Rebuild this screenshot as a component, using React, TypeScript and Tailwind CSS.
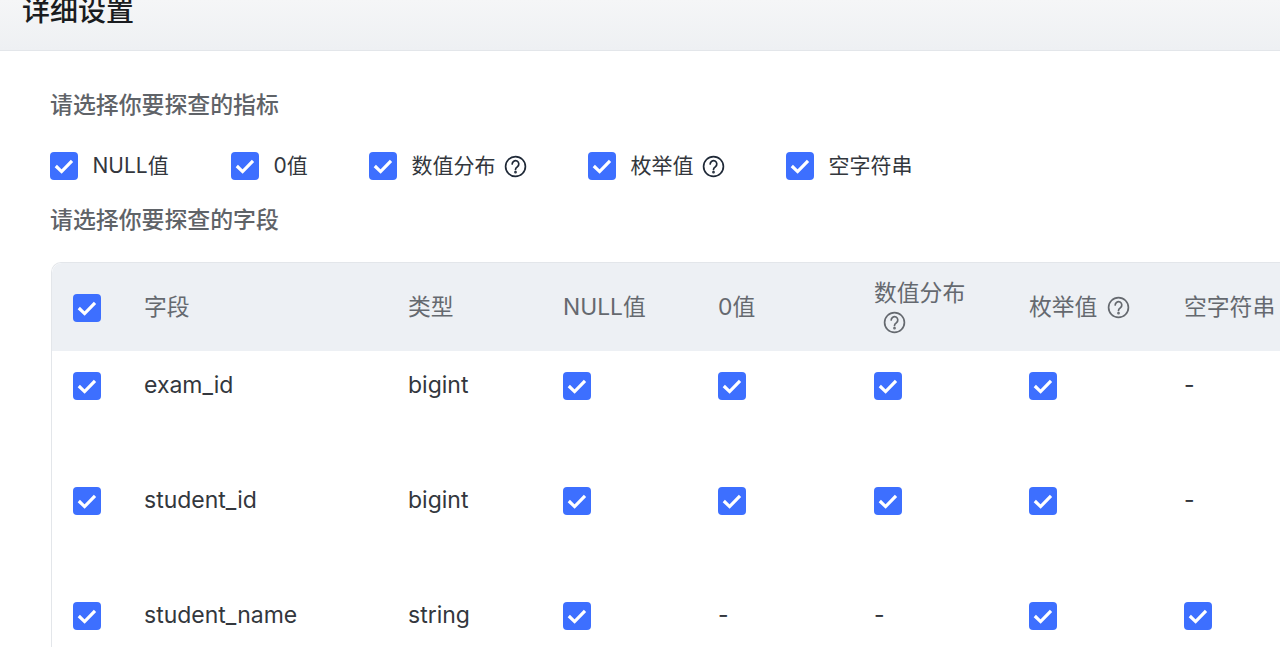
import { Fragment } from 'react';

const FONT = "font-['Inter','Noto_Sans_CJK_SC',sans-serif]";

const Check = ({ className = '' }: { className?: string }) => (
    <span className={`flex h-7 w-7 shrink-0 items-center justify-center rounded-[4px] bg-[#3d6fff] ${className}`}>
        <svg width="20" height="20" viewBox="0 0 20 20" fill="none">
            <path d="M1.8 10 L7.6 15.6 L18 4.8" stroke="#fff" strokeWidth="3.2" />
        </svg>
    </span>
);

const Help = ({ color = '#1f2937' }: { color?: string }) => (
    <svg width="23" height="23" viewBox="0 0 23 23" fill="none" stroke={color} strokeWidth="1.7" className="shrink-0">
        <circle cx="11.5" cy="11.5" r="9.9" />
        <path d="M8.2 9a3.3 3.3 0 1 1 5.2 2.7c-1.2.8-1.9 1.3-1.9 2.8" strokeLinecap="round" />
        <circle cx="11.5" cy="17.2" r="0.5" fill={color} />
    </svg>
);

const metrics = [
    { label: 'NULL值', width: 'w-[181px]' },
    { label: '0值', width: 'w-[138px]' },
    { label: '数值分布', help: true, width: 'w-[219px]' },
    { label: '枚举值', help: true, width: 'w-[198px]' },
    { label: '空字符串', width: 'w-[160px]' },
];

const rows = [
    { name: 'exam_id', type: 'bigint', flags: [true, true, true, true, false] },
    { name: 'student_id', type: 'bigint', flags: [true, true, true, true, false] },
    { name: 'student_name', type: 'string', flags: [true, false, false, true, true] },
];

const GRID = 'grid grid-cols-[92px_264px_155px_155px_156px_155px_155px_155px]';

export default function App() {
    return (
        <div className={`h-[647px] w-[1280px] overflow-hidden bg-white ${FONT}`}>
            {/* Header */}
            <div className="h-[51px] overflow-hidden border-b border-[#e3e6ea] bg-gradient-to-b from-[#f5f6f7] to-[#eef0f3] pl-[22px]">
                <h1 className="-mt-[9px] text-[28px] leading-[40px] font-medium text-[#1a1c20]">详细设置</h1>
            </div>

            <div className="pl-[51px]">
                <h2 className="mt-[37px] -ml-px text-[22.9px] leading-[34px] font-medium text-[#5f6368]">请选择你要探查的指标</h2>

                {/* Metrics */}
                <div className="mt-[29px] -ml-px flex h-[30px] items-center">
                    {metrics.map((m) => (
                        <div key={m.label} className={`flex items-center ${m.width}`}>
                            <Check />
                            <span className="ml-[14.5px] text-[21px] leading-[30px] text-[#33373d]">{m.label}</span>
                            {m.help && <span className="ml-[8px]"><Help /></span>}
                        </div>
                    ))}
                </div>

                <h2 className="mt-[22px] -ml-px text-[22.9px] leading-[34px] font-medium text-[#5f6368]">请选择你要探查的字段</h2>

                {/* Table */}
                <div className="mt-[25px] w-[1400px] rounded-tl-[10px] border-t border-l border-[#e3e6ea]">
                    <div className={`${GRID} h-[88px] items-center rounded-tl-[10px] bg-[#edf0f4] text-[22.8px] leading-[30px] text-[#65696f]`}>
                        <div className="pl-[21px]"><Check className="mt-px" /></div>
                        <div>字段</div>
                        <div>类型</div>
                        <div>NULL值</div>
                        <div>0值</div>
                        <div className="flex flex-col items-start pb-[3px]">
                            <span>数值分布</span>
                            <span className="ml-[9px] mt-[3px]"><Help color="#65696f" /></span>
                        </div>
                        <div className="flex items-center gap-[10px]">枚举值<Help color="#65696f" /></div>
                        <div>空字符串</div>
                    </div>
                    <div className={`${GRID} text-[23px] leading-[30px] text-[#33373d]`}>
                        {rows.map((r) => (
                            <Fragment key={r.name}>
                                <div className="h-[115px] pt-[21px] pl-[21px]"><Check /></div>
                                <div className="pt-[19px]">{r.name}</div>
                                <div className="pt-[19px]">{r.type}</div>
                                {r.flags.map((on, i) => (
                                    <div key={i} className="pt-[19px]">
                                        {on ? <Check className="mt-[2px]" /> : '-'}
                                    </div>
                                ))}
                            </Fragment>
                        ))}
                    </div>
                </div>
            </div>
        </div>
    );
}
